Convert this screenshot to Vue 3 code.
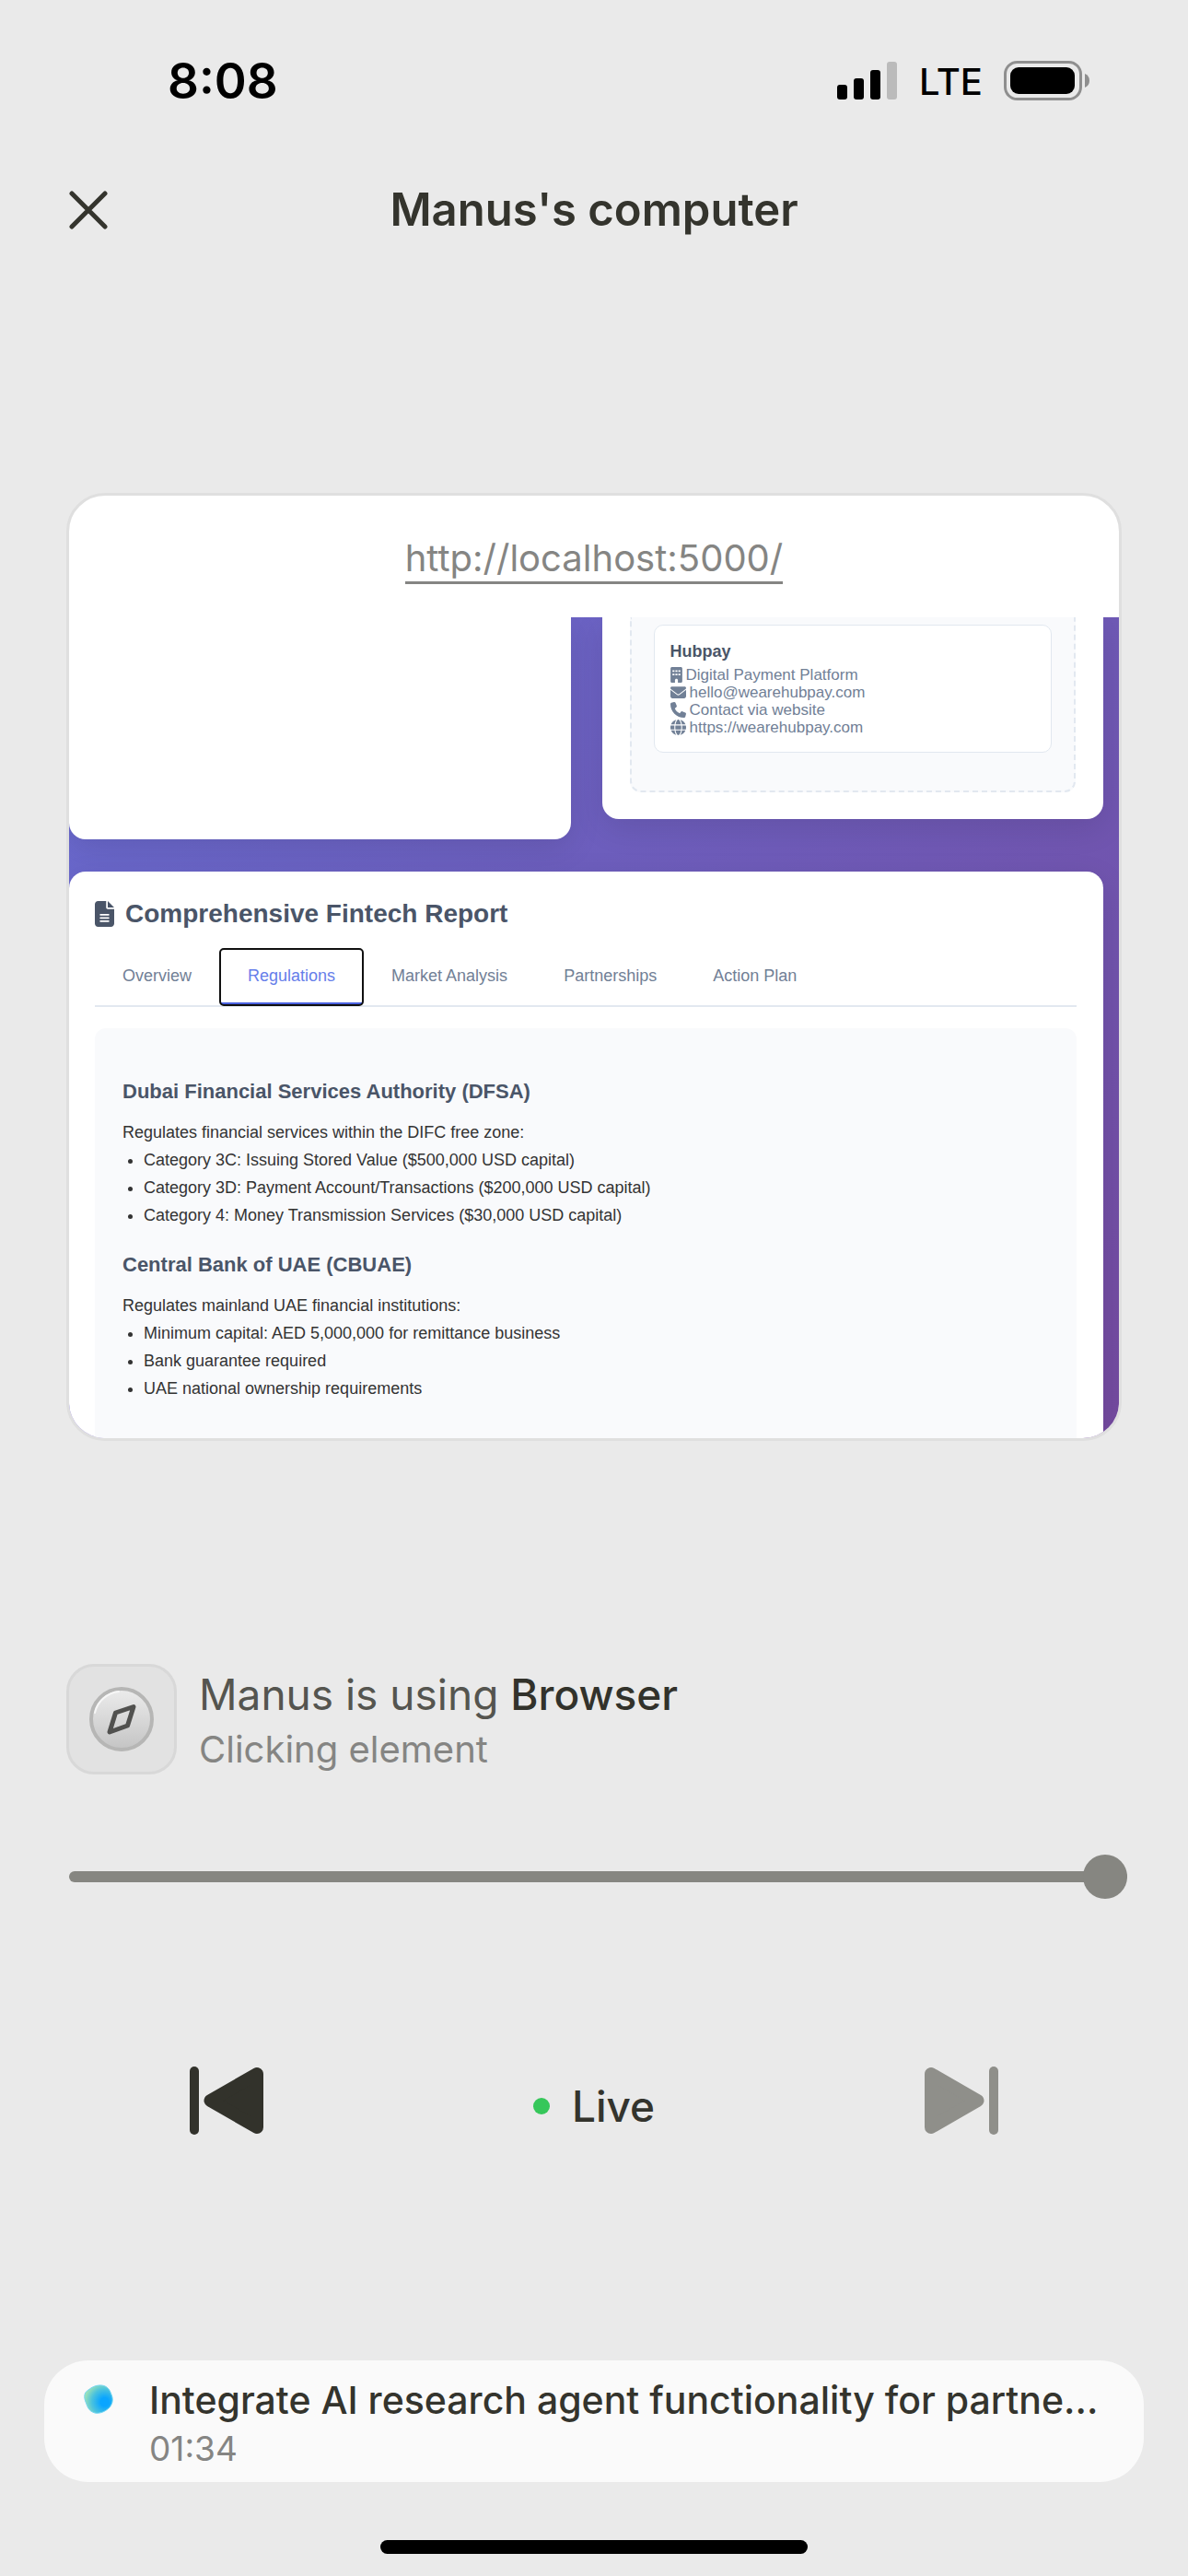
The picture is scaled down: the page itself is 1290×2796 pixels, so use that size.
<script setup>
import { ref } from 'vue'

const progress = ref(100)
const activeTab = ref('Regulations')
const tabs = ['Overview', 'Regulations', 'Market Analysis', 'Partnerships', 'Action Plan']

const icons = {
  envelope:
    'M48 64C21.5 64 0 85.5 0 112c0 15.1 7.1 29.3 19.2 38.4L236.8 313.6c11.4 8.5 27 8.5 38.4 0L492.8 150.4c12.1-9.1 19.2-23.3 19.2-38.4c0-26.5-21.5-48-48-48H48zM0 176V384c0 35.3 28.7 64 64 64H448c35.3 0 64-28.7 64-64V176L294.4 339.2c-22.8 17.1-54 17.1-76.8 0L0 176z',
  phone:
    'M164.9 24.6c-7.7-18.6-28-28.5-47.4-23.2l-88 24C12.1 30.2 0 46 0 64C0 311.4 200.6 512 448 512c18 0 33.8-12.1 38.6-29.5l24-88c5.3-19.4-4.6-39.7-23.2-47.4l-96-40c-16.3-6.8-35.2-2.1-46.3 11.6L304.7 368C234.3 334.7 177.3 277.7 144 207.3L193.3 167c13.7-11.2 18.4-30 11.6-46.3l-40-96z',
  globe:
    'M352 256c0 22.2-1.2 43.6-3.3 64H163.3c-2.2-20.4-3.3-41.8-3.3-64s1.2-43.6 3.3-64H348.7c2.2 20.4 3.3 41.8 3.3 64zm28.8-64H503.9c5.3 20.5 8.1 41.9 8.1 64s-2.8 43.5-8.1 64H380.8c2.1-20.6 3.2-42 3.2-64s-1.1-43.4-3.2-64zm112.6-32H376.7c-10-63.9-29.8-117.4-55.3-151.6c78.3 20.7 142 77.5 171.9 151.6zm-149.1 0H167.7c6.1-36.4 15.5-68.6 27-94.7c10.5-23.6 22.2-40.7 33.5-51.5C239.4 3.2 248.7 0 256 0s16.6 3.2 27.8 13.8c11.3 10.8 23 27.9 33.5 51.5c11.6 26 20.9 58.2 27 94.7zm-209 0H18.6C48.6 85.9 112.2 29.1 190.6 8.4C165.1 42.6 145.3 96.1 135.3 160zM8.1 192H131.2c-2.1 20.6-3.2 42-3.2 64s1.1 43.4 3.2 64H8.1C2.8 299.5 0 278.1 0 256s2.8-43.5 8.1-64zM194.7 446.6c-11.6-26-20.9-58.2-27-94.6H344.3c-6.1 36.4-15.5 68.6-27 94.6c-10.5 23.6-22.2 40.7-33.5 51.5C272.6 508.8 263.3 512 256 512s-16.6-3.2-27.8-13.8c-11.3-10.8-23-27.9-33.5-51.5zM135.3 352c10 63.9 29.8 117.4 55.3 151.6C112.2 482.9 48.6 426.1 18.6 352H135.3zm358.1 0c-30 74.1-93.6 130.9-171.9 151.6c25.5-34.2 45.2-87.7 55.3-151.6H493.4z',
  building:
    'M48 0C21.5 0 0 21.5 0 48V464c0 26.500 21.500 48 48 48h96V432c0-26.500 21.500-48 48-48s48 21.500 48 48v80h96c26.500 0 48-21.500 48-48V48c0-26.500-21.500-48-48-48H48zM64 104h64v56H64zM160 104h64v56h-64zM256 104h64v56h-64zM64 216h64v56H64zM160 216h64v56h-64zM256 216h64v56h-64z',
}

const contacts = [
  { icon: 'building', box: '0 0 384 512', width: 13, text: 'Digital Payment Platform' },
  { icon: 'envelope', box: '0 0 512 512', width: 17, text: 'hello@wearehubpay.com' },
  { icon: 'phone', box: '0 0 512 512', width: 17, text: 'Contact via website' },
  { icon: 'globe', box: '0 0 512 512', width: 17, text: 'https://wearehubpay.com' },
]

const regulators = [
  {
    name: 'Dubai Financial Services Authority (DFSA)',
    intro: 'Regulates financial services within the DIFC free zone:',
    items: [
      'Category 3C: Issuing Stored Value ($500,000 USD capital)',
      'Category 3D: Payment Account/Transactions ($200,000 USD capital)',
      'Category 4: Money Transmission Services ($30,000 USD capital)',
    ],
  },
  {
    name: 'Central Bank of UAE (CBUAE)',
    intro: 'Regulates mainland UAE financial institutions:',
    items: [
      'Minimum capital: AED 5,000,000 for remittance business',
      'Bank guarantee required',
      'UAE national ownership requirements',
    ],
  },
]
</script>

<template>
  <div class="screen">
    <div class="status">
      <time class="clock">8:08</time>
      <div class="indicators">
        <svg class="signal" viewBox="0 0 66 42" aria-hidden="true">
          <rect x="0" y="25" width="11" height="16" rx="3" />
          <rect x="18" y="18" width="11" height="23" rx="3" />
          <rect x="36" y="9" width="11" height="32" rx="3" />
          <rect x="54" y="0" width="11" height="41" rx="3" fill="#bbb" />
        </svg>
        <span class="network">LTE</span>
        <svg class="battery" viewBox="0 0 94 44" aria-hidden="true">
          <rect x="1.500" y="1.500" width="82" height="40" rx="13" fill="none" stroke="#8f8f8f" stroke-width="3" />
          <rect x="7" y="7" width="70" height="29" rx="9" />
          <path d="M88 14q5 2 5 7.500t-5 7.500z" fill="#8f8f8f" />
        </svg>
      </div>
    </div>

    <header class="topbar">
      <button class="close" type="button" aria-label="Close">
        <svg viewBox="0 0 42 42"><path d="M3 3 39 39M39 3 3 39" fill="none" stroke="#34342d" stroke-width="5" stroke-linecap="round" /></svg>
      </button>
      <h1>Manus's computer</h1>
    </header>

    <section class="window">
      <div class="address"><a href="http://localhost:5000/">http://localhost:5000/</a></div>
      <div class="page">
        <div class="columns">
          <div class="panel blank"></div>
          <div class="panel partner">
            <div class="dashed">
              <article class="contact">
                <h4>Hubpay</h4>
                <p v-for="c in contacts" :key="c.text">
                  <svg :viewBox="c.box" :width="c.width" height="17" aria-hidden="true"><path :d="icons[c.icon]" fill="currentColor" fill-rule="evenodd" /></svg>
                  <span>{{ c.text }}</span>
                </p>
              </article>
            </div>
          </div>
        </div>

        <div class="panel report">
          <h2>
            <svg viewBox="0 0 384 512" width="21" height="28" aria-hidden="true">
              <path
                fill="currentColor"
                d="M64 0C28.700 0 0 28.700 0 64V448c0 35.300 28.700 64 64 64H320c35.300 0 64-28.700 64-64V160H256c-17.700 0-32-14.300-32-32V0H64zM256 0V128H384L256 0zM112 256H272c8.800 0 16 7.200 16 16s-7.200 16-16 16H112c-8.800 0-16-7.200-16-16s7.200-16 16-16zm0 64H272c8.800 0 16 7.200 16 16s-7.200 16-16 16H112c-8.800 0-16-7.200-16-16s7.200-16 16-16zm0 64H272c8.800 0 16 7.200 16 16s-7.200 16-16 16H112c-8.800 0-16-7.200-16-16s7.200-16 16-16z"
              />
            </svg>
            <span>Comprehensive Fintech Report</span>
          </h2>
          <nav class="tabs">
            <button
              v-for="tab in tabs"
              :key="tab"
              type="button"
              :class="{ active: tab === activeTab }"
              @click="activeTab = tab"
            >{{ tab }}</button>
          </nav>
          <div class="details">
            <section v-for="r in regulators" :key="r.name">
              <h3>{{ r.name }}</h3>
              <p>{{ r.intro }}</p>
              <ul>
                <li v-for="item in r.items" :key="item">{{ item }}</li>
              </ul>
            </section>
          </div>
        </div>
      </div>
    </section>

    <section class="activity">
      <div class="tool">
        <svg viewBox="0 0 70 70" aria-hidden="true">
          <defs>
            <linearGradient id="dial" x1="0" y1="0" x2="0" y2="1">
              <stop offset="0" stop-color="#ececec" />
              <stop offset="1" stop-color="#c4c4c4" />
            </linearGradient>
          </defs>
          <circle cx="35" cy="35" r="33" fill="url(#dial)" stroke="#b6b6b5" stroke-width="4" />
          <path d="M6 28A30 30 0 0 1 32 5" fill="none" stroke="#f7f7f7" stroke-width="2" stroke-linecap="round" />
          <path d="M28.500 28 48 21.500 41.500 42 22 49z" fill="none" stroke="#51514f" stroke-width="5" stroke-linejoin="round" />
        </svg>
      </div>
      <div>
        <p class="doing">Manus is using <strong>Browser</strong></p>
        <p class="step">Clicking element</p>
      </div>
    </section>

    <input v-model="progress" class="timeline" type="range" min="0" max="100" aria-label="Timeline" />

    <div class="controls">
      <button type="button" aria-label="Previous step">
        <svg viewBox="0 0 80 74" fill="#32322b" stroke="#32322b">
          <rect width="10" height="74" rx="5" stroke="none" />
          <path d="M22.500 37 73 8V66Z" stroke-width="14" stroke-linejoin="round" />
        </svg>
      </button>
      <div class="live"><i></i><span>Live</span></div>
      <button type="button" aria-label="Next step">
        <svg viewBox="0 0 80 74" fill="#8f8f8a" stroke="#8f8f8a">
          <rect x="70" width="10" height="74" rx="5" stroke="none" />
          <path d="M57.500 37 7 8V66Z" stroke-width="14" stroke-linejoin="round" />
        </svg>
      </button>
    </div>

    <section class="task">
      <svg class="blob" viewBox="0 0 32 32" aria-hidden="true">
        <defs>
          <radialGradient id="drop" cx="0.720" cy="0.600" r="0.750">
            <stop offset="0.200" stop-color="#0aa5ff" />
            <stop offset="0.620" stop-color="#4cc3dd" />
            <stop offset="1" stop-color="#a4e5b4" />
          </radialGradient>
        </defs>
        <path d="M17 1C24 .5 28 5 29.500 10 32 15 32 20 28 25 23 30 17 32 12 31 5 29 4 24 2 19 0 14 0 9 5 6 9 3 12 1.300 17 1Z" fill="url(#drop)" stroke="#6fd5f3" stroke-width="1" />
      </svg>
      <div>
        <p class="task-name">Integrate AI research agent functionality for partne...</p>
        <p class="task-time">01:34</p>
      </div>
    </section>

    <div class="home"></div>
  </div>
</template>

<style>
body {
  margin: 0;
  background: #eaeaea;
}
</style>

<style scoped>
.screen {
  display: flex;
  flex-direction: column;
  box-sizing: border-box;
  min-height: 100vh;
  background: #eaeaea;
  color: #34342d;
  font-family: Inter, 'Liberation Sans', sans-serif;
}

h1, h2, h3, h4, p, ul {
  margin: 0;
  padding: 0;
}

svg {
  display: block;
  flex: none;
}

button {
  padding: 0;
  border: 0;
  background: none;
  color: inherit;
  font: inherit;
  cursor: pointer;
}

.status {
  display: flex;
  align-items: center;
  justify-content: space-between;
  height: 64px;
  margin-top: 56px;
  padding: 0 106px 0 182px;
  color: #000;
}

.clock {
  font-size: 53px;
  font-weight: 600;
}

.indicators {
  display: flex;
  align-items: center;
  gap: 23px;
}

.signal {
  width: 66px;
  height: 42px;
}

.network {
  padding-top: 2px;
  font-size: 40px;
  font-weight: 500;
  line-height: 48px;
}

.battery {
  width: 94px;
  height: 44px;
}

.topbar {
  display: grid;
  grid-template-columns: 1fr auto 1fr;
  align-items: center;
  margin-top: 78px;
  padding: 0 75px;
}

.close svg {
  width: 42px;
  height: 42px;
}

h1 {
  font-size: 49px;
  font-weight: 600;
  line-height: 60px;
}

.window {
  margin: 277px 72px 0;
  border: 3px solid #dfdfdf;
  border-radius: 42px;
  background: #fff;
  overflow: hidden;
}

.address {
  display: flex;
  justify-content: center;
  height: 132px;
}

.address a {
  align-self: flex-start;
  margin-top: 42px;
  border-bottom: 3px solid #858583;
  color: #858583;
  font-size: 40px;
  line-height: 51px;
  text-decoration: none;
}

.page {
  overflow: hidden;
  background: linear-gradient(135deg, #686cd2, #744a9f);
  font-family: 'Liberation Sans', Arial, sans-serif;
  font-size: 18px;
  color: #333;
}

.columns {
  display: grid;
  grid-template-columns: 1fr 1fr;
  gap: 34px;
  align-items: start;
  padding: 0 17px 35px 0;
}

.panel {
  border-radius: 18px;
  background: #fff;
  box-shadow: 0 10px 34px rgba(0, 0, 0, 0.1);
}

.blank {
  height: 241px;
  border-top-left-radius: 0;
  border-top-right-radius: 0;
}

.partner {
  padding: 0 30px 29px;
  border-top-left-radius: 0;
  border-top-right-radius: 0;
}

.dashed {
  padding: 8px 24px 41px;
  border: 2px dashed #e2e8f0;
  border-top: 0;
  border-radius: 0 0 12px 12px;
  background: #f9fafc;
}

.contact {
  padding: 17px;
  border: 1px solid #e2e8f0;
  border-radius: 10px;
  background: #fff;
  color: #718096;
}

.contact h4 {
  margin-bottom: 5px;
  color: #4a5568;
  font-size: 18px;
  line-height: 22px;
}

.contact p {
  display: flex;
  align-items: center;
  gap: 4px;
  font-size: 17px;
  line-height: 19px;
}

.report {
  margin-right: 17px;
  padding: 28px 29px 0 28px;
  border-bottom-left-radius: 0;
  border-bottom-right-radius: 0;
}

h2 {
  display: flex;
  align-items: center;
  gap: 12px;
  color: #4a5568;
  font-size: 28px;
  line-height: 36px;
}

.tabs {
  display: flex;
  gap: 1px;
  margin: 20px 0 23px;
  border-bottom: 2px solid #e2e8f0;
  color: #718096;
}

.tabs button {
  padding: 19px 30px;
  border-bottom: 3px solid transparent;
  line-height: 20px;
}

.tabs .active {
  border-bottom-color: #4a62e0;
  border-radius: 4px;
  outline: 2px solid #101010;
  outline-offset: -1px;
  color: #667eea;
}

.details {
  padding: 30px 30px 39px;
  border-radius: 12px 12px 0 0;
  background: #f9fafc;
  line-height: 30px;
}

h3 {
  padding: 24px 0 14px;
  color: #4a5568;
  font-size: 22px;
  line-height: 30px;
}

ul {
  padding-left: 23px;
}

.activity {
  display: flex;
  align-items: center;
  gap: 24px;
  margin-top: 242px;
  padding: 0 72px;
}

.tool {
  display: grid;
  place-items: center;
  box-sizing: border-box;
  width: 120px;
  height: 120px;
  border: 3px solid #d8d8d8;
  border-radius: 30px;
  background: #e2e2e2;
}

.tool svg {
  width: 70px;
  height: 70px;
}

.doing {
  color: #55554f;
  font-size: 46px;
  line-height: 66px;
}

.doing strong {
  color: #32322b;
  font-weight: 500;
}

.step {
  color: #858583;
  font-size: 40px;
  line-height: 54px;
}

.timeline {
  appearance: none;
  height: 48px;
  margin: 87px 66px 0 75px;
  background: none;
}

.timeline::-webkit-slider-runnable-track {
  height: 12px;
  border-radius: 6px;
  background: #868681;
}

.timeline::-webkit-slider-thumb {
  appearance: none;
  width: 48px;
  height: 48px;
  margin-top: -18px;
  border-radius: 50%;
  background: #868681;
}

.controls {
  display: flex;
  justify-content: space-between;
  margin-top: 182px;
  padding: 0 16%;
}

.controls svg {
  width: 80px;
  height: 74px;
}

.live {
  display: flex;
  align-items: center;
  gap: 24px;
  padding-top: 12px;
  font-size: 46px;
  font-weight: 500;
}

.live i {
  width: 18px;
  height: 18px;
  border-radius: 50%;
  background: #36c75a;
}

.task {
  display: flex;
  gap: 39px;
  margin: 245px 48px 0;
  padding: 15px 36px 11px 43px;
  border-radius: 48px;
  background: #fafafa;
}

.blob {
  width: 32px;
  height: 32px;
  margin-top: 11px;
}

.task-name {
  font-size: 41px;
  font-weight: 500;
  line-height: 56px;
  white-space: nowrap;
}

.task-time {
  color: #858583;
  font-size: 37px;
  line-height: 50px;
}

.home {
  width: 36%;
  height: 15px;
  margin: 63px auto 24px;
  border-radius: 8px;
  background: #000;
}
</style>
